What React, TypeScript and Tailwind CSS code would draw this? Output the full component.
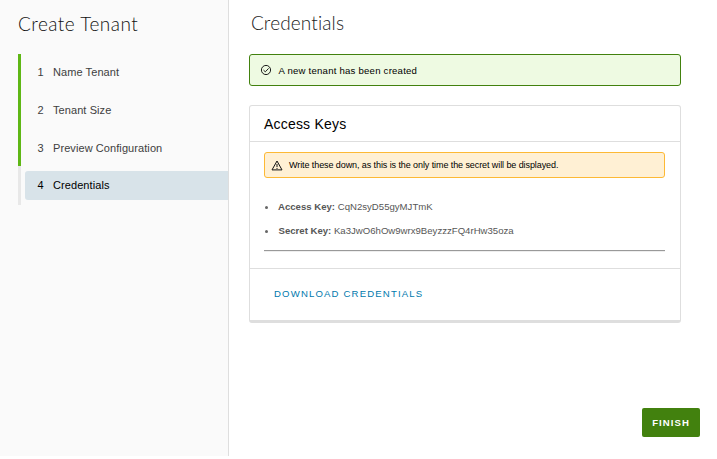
const steps = ["Name Tenant", "Tenant Size", "Preview Configuration"];

function CheckIcon() {
  return (
    <svg className="size-3 shrink-0" viewBox="0 0 12 12" fill="none" stroke="#111" strokeWidth="0.95">
      <circle cx="6" cy="6" r="4.6" />
      <path d="M3.5 6.1 5.3 7.8 8.6 4.4" />
    </svg>
  );
}

function WarningIcon() {
  return (
    <svg className="h-[11px] w-3 shrink-0" viewBox="0 0 12 11" fill="none" stroke="#111" strokeWidth="1" strokeLinejoin="round">
      <path d="M6 1 11 9.9H1Z" />
      <path d="M6 4v3M6 7.9v1" />
    </svg>
  );
}

export default function App() {
  return (
    <div className="flex h-[459px] w-[717px] overflow-hidden bg-white font-['Liberation_Sans',Arial,sans-serif] whitespace-nowrap text-black">
      <aside className="h-[456px] w-[229px] shrink-0 border-r border-[#dedede] bg-[#fafafa]">
        <h1 className="h-[54px] pt-[10px] pl-[18px] font-[Lato,sans-serif] text-[19px] leading-[28px] font-light tracking-[0.48px] text-[#111]">
          Create Tenant
        </h1>
        <div className="flex pl-[18px]">
          <div className="h-[151px] w-[3px] shrink-0 bg-[#e8e8e8]">
            <div className="h-[112px] bg-[#5eb715]" />
          </div>
          <nav className="ml-1 flex-1 text-[11px] text-[#404040]">
            <div className="-mt-px mb-1">
              {steps.map((label, i) => (
                <div key={label} className="flex h-[38px] items-center pl-[12.5px]">
                  <span className="w-[15.5px]">{i + 1}</span>
                  <span className="tracking-[0.08px]">{label}</span>
                </div>
              ))}
            </div>
            <div className="flex h-[29px] items-center rounded-l-[3px] bg-[#d8e3e9] pl-[12.5px] text-black">
              <span className="w-[15.5px]">4</span>
              <span className="tracking-[0.08px]">Credentials</span>
            </div>
          </nav>
        </div>
      </aside>
      <main className="flex w-[488px] flex-col pl-5">
        <h2 className="h-[54px] pt-[9px] pl-[2px] font-[Lato,sans-serif] text-[19px] leading-[28px] font-light tracking-[0.12px] text-[#222]">
          Credentials
        </h2>
        <div className="flex h-8 w-[432px] items-center rounded-[3px] border border-[#42810e] bg-[#eefae2] pl-[10px] text-[9.6px] tracking-[0.22px]">
          <CheckIcon />
          <span className="ml-[6.5px] pt-[2px]">A new tenant has been created</span>
        </div>
        <section className="mt-[19px] h-[218px] w-[432px] rounded-[3px] border border-b-[3px] border-[#dedede]">
          <h3 className="h-9 border-b border-[#dedede] pl-[14px] text-[14px] leading-[36px] tracking-[0.2px]">Access Keys</h3>
          <div className="h-[127px] border-b border-[#dedede] pt-[10px] pr-[15px] pl-[14px]">
            <div className="flex h-[26px] items-center rounded-[3px] border border-[#fdb935] bg-[#fff0d4] pl-[6px] text-[9px] tracking-[-0.085px]">
              <WarningIcon />
              <span className="ml-[6px] pt-px">Write these down, as this is the only time the secret will be displayed.</span>
            </div>
            <ul className="mt-[17px] text-[9.6px] leading-[24px] text-[#565656]">
              <li className="flex items-center">
                <span className="mr-[10.5px] ml-[0.5px] size-[3px] rounded-full bg-[#666]" />
                <span><b>Access Key:</b> CqN2syD55gyMJTmK</span>
              </li>
              <li className="flex items-center">
                <span className="mr-[11px] ml-[0.5px] size-[3px] rounded-full bg-[#666]" />
                <span><b>Secret Key:</b> Ka3JwO6hOw9wrx9BeyzzzFQ4rHw35oza</span>
              </li>
            </ul>
            <div className="mt-[7px] h-[2px] border-t border-b border-t-[#999] border-b-[#eee]" />
          </div>
          <div className="flex h-[51px] items-center pl-[24px] text-[9.6px] tracking-[1.15px] text-[#0079ad]">
            DOWNLOAD CREDENTIALS
          </div>
        </section>
        <button className="mt-[85px] ml-[393px] h-[29px] w-[58px] rounded-[2px] bg-[#42810e] pt-px text-[9.6px] font-bold tracking-[1.05px] text-white">
          FINISH
        </button>
      </main>
    </div>
  );
}
